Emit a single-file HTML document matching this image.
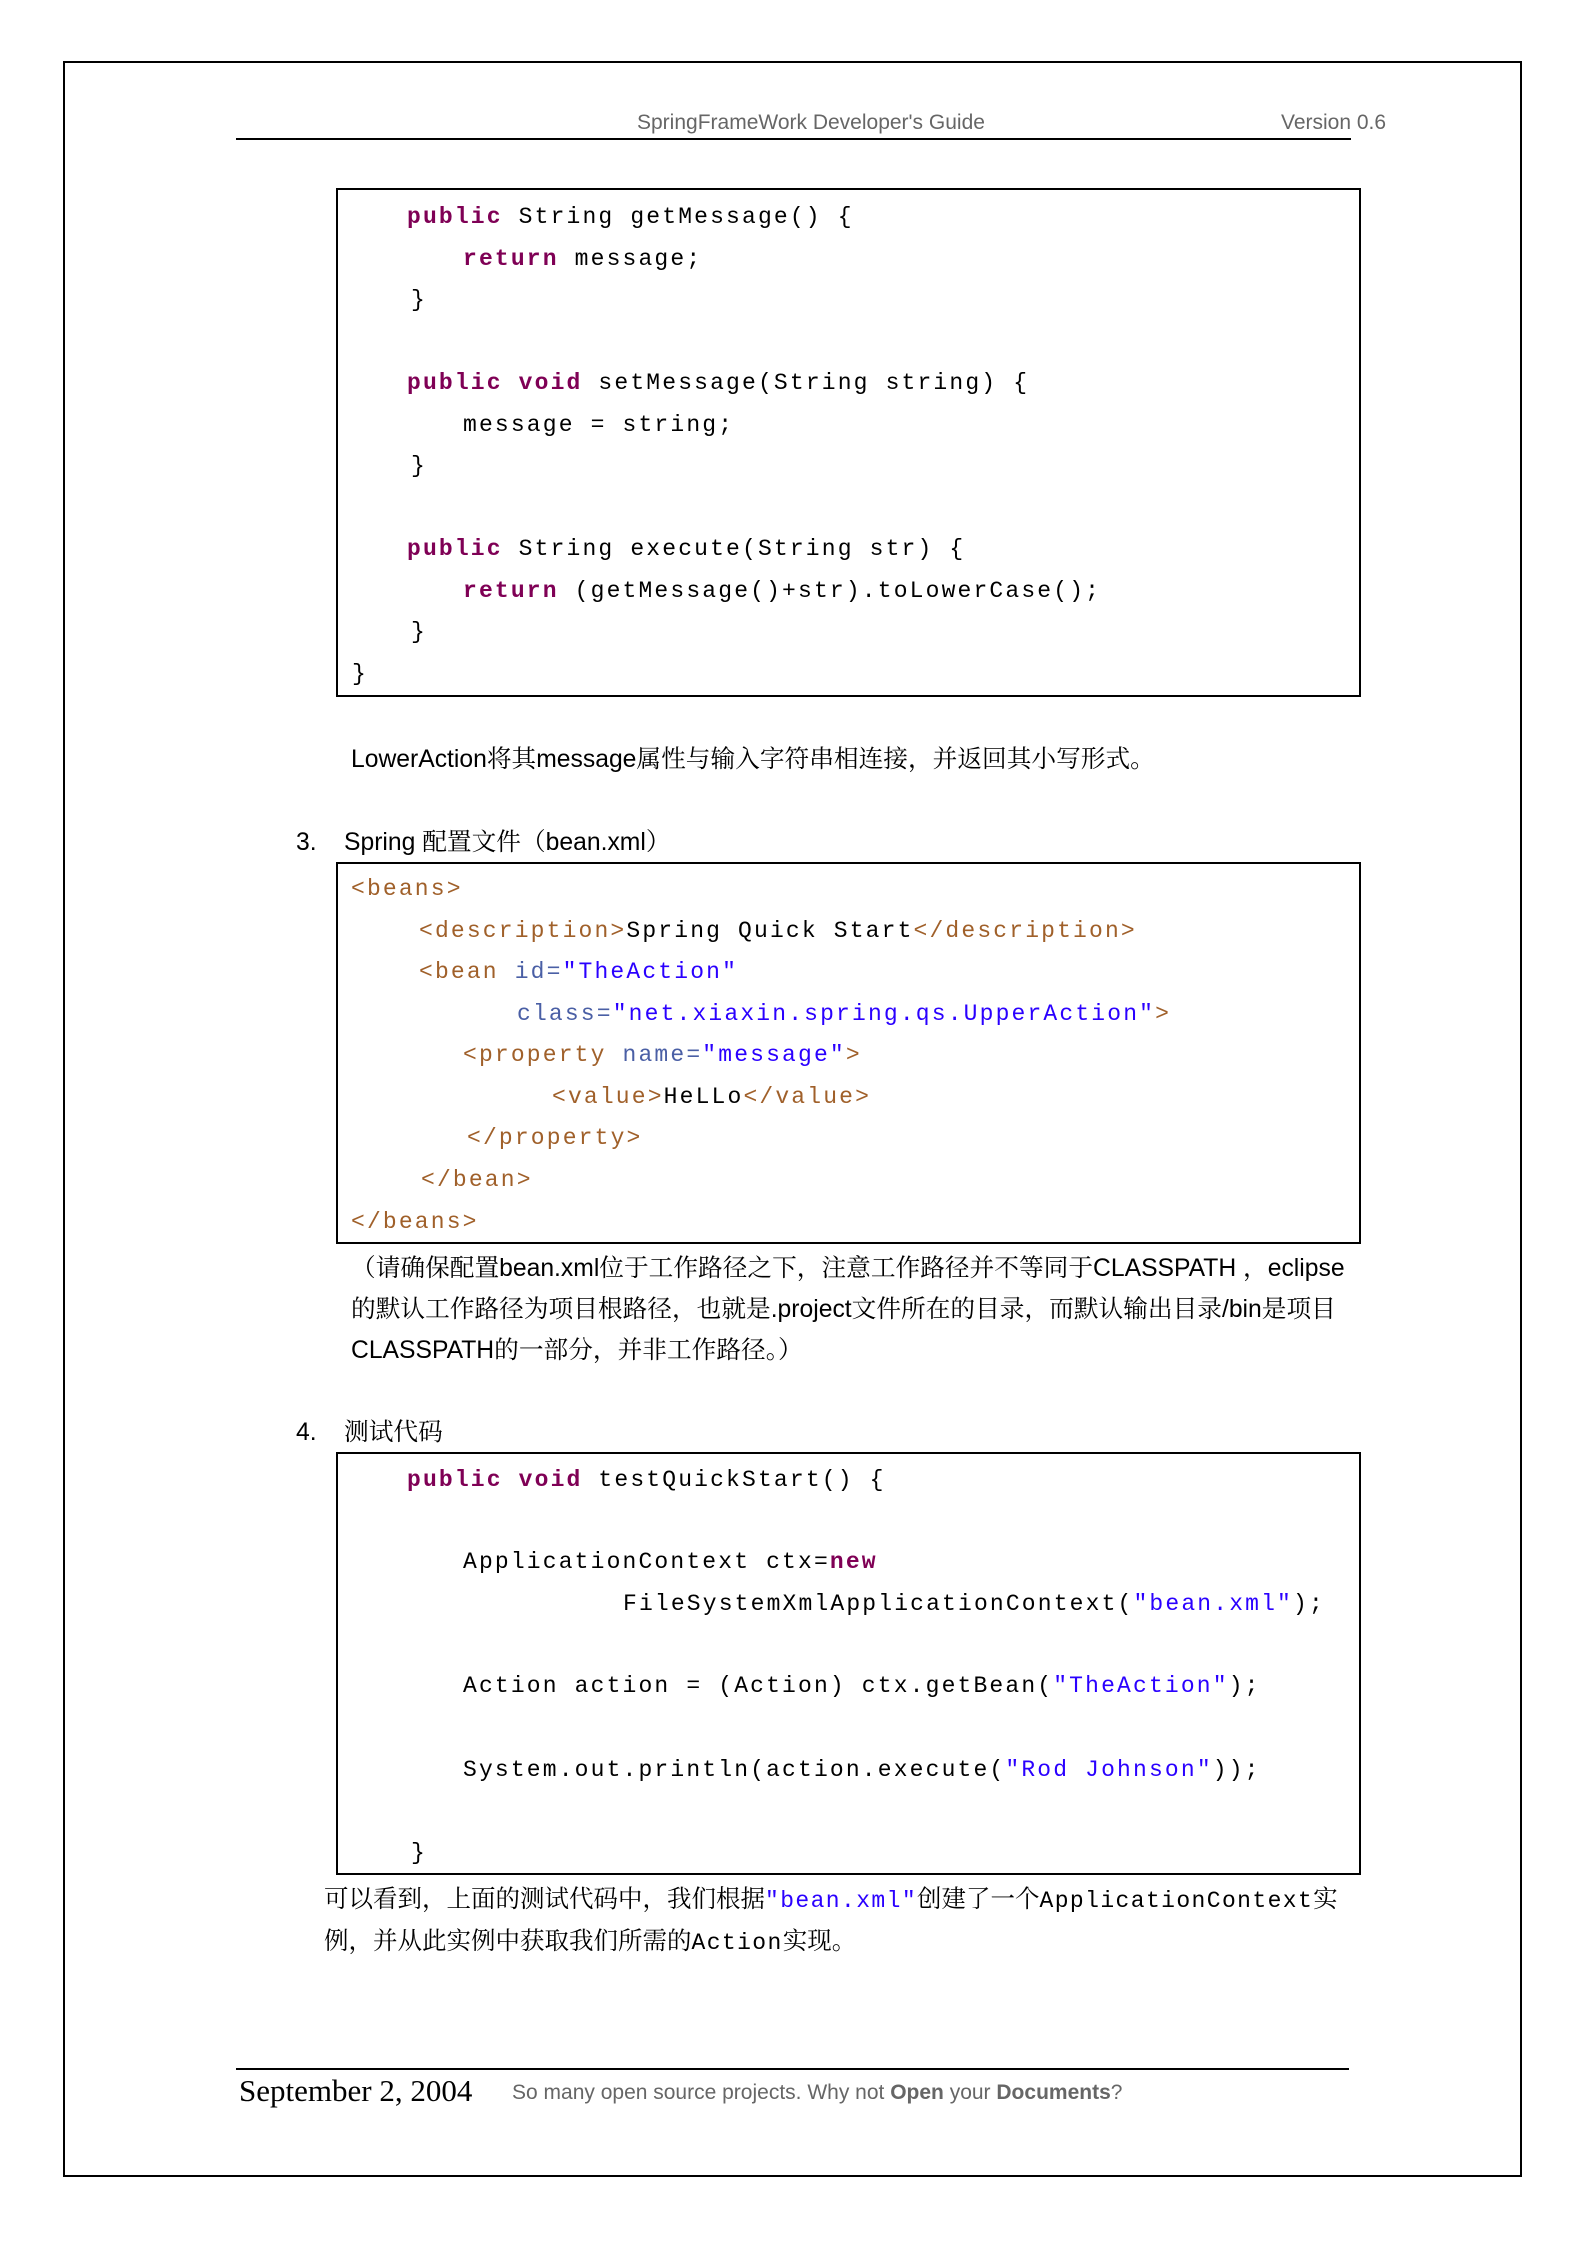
<!DOCTYPE html>
<html><head><meta charset="utf-8">
<style>
html,body{margin:0;padding:0;background:#fff;}
body{width:1586px;height:2242px;position:relative;overflow:hidden;}
.a{position:absolute;white-space:pre;}
.box{position:absolute;border:2px solid #000;box-sizing:border-box;}
.code{position:absolute;white-space:pre;font-family:"Liberation Mono",monospace;font-size:23px;letter-spacing:2.15px;line-height:30px;height:30px;color:#000;}
.k{color:#7f0055;font-weight:bold;}
.s{color:#2a00ff;}
.t{color:#a0602a;}
.n{color:#4a5fa5;}
.cn{font-family:"Liberation Sans","Noto Serif CJK SC","Noto Sans CJK SC",sans-serif;font-size:24.7px;line-height:30px;color:#000;}
.hd{font-family:"Liberation Sans",sans-serif;font-size:21px;color:#666;}
</style></head><body>
<div class="box" style="left:63px;top:61px;width:1459px;height:2116px;"></div>
<div class="a hd" style="left:637px;top:111px;">SpringFrameWork Developer's Guide</div>
<div class="a hd" style="left:1281px;top:111px;">Version 0.6</div>
<div style="position:absolute;left:236px;top:138px;width:1115px;height:2px;background:#000"></div>

<div class="box" style="left:336px;top:188px;width:1025px;height:509px;"></div>
<div class="code" style="left:407px;top:202px"><span class="k">public</span> String getMessage() {</div>
<div class="code" style="left:463px;top:244px"><span class="k">return</span> message;</div>
<div class="code" style="left:411px;top:285px">}</div>
<div class="code" style="left:407px;top:368px"><span class="k">public</span> <span class="k">void</span> setMessage(String string) {</div>
<div class="code" style="left:463px;top:410px">message = string;</div>
<div class="code" style="left:411px;top:451px">}</div>
<div class="code" style="left:407px;top:534px"><span class="k">public</span> String execute(String str) {</div>
<div class="code" style="left:463px;top:576px"><span class="k">return</span> (getMessage()+str).toLowerCase();</div>
<div class="code" style="left:411px;top:617px">}</div>
<div class="code" style="left:352px;top:659px">}</div>

<div class="a cn" style="left:351px;top:745px;">LowerAction将其message属性与输入字符串相连接，并返回其小写形式。</div>

<div class="a cn" style="left:296px;top:828px;">3.</div>
<div class="a cn" style="left:344px;top:828px;">Spring 配置文件（bean.xml）</div>

<div class="box" style="left:336px;top:862px;width:1025px;height:382px;"></div>
<div class="code" style="left:351px;top:874px"><span class="t">&lt;beans&gt;</span></div>
<div class="code" style="left:419px;top:916px"><span class="t">&lt;description&gt;</span>Spring Quick Start<span class="t">&lt;/description&gt;</span></div>
<div class="code" style="left:419px;top:957px"><span class="t">&lt;bean</span> <span class="n">id=</span><span class="s">"TheAction"</span></div>
<div class="code" style="left:517px;top:999px"><span class="n">class=</span><span class="s">"net.xiaxin.spring.qs.UpperAction"</span><span class="t">&gt;</span></div>
<div class="code" style="left:463px;top:1040px"><span class="t">&lt;property</span> <span class="n">name=</span><span class="s">"message"</span><span class="t">&gt;</span></div>
<div class="code" style="left:552px;top:1082px"><span class="t">&lt;value&gt;</span>HeLLo<span class="t">&lt;/value&gt;</span></div>
<div class="code" style="left:467px;top:1123px"><span class="t">&lt;/property&gt;</span></div>
<div class="code" style="left:421px;top:1165px"><span class="t">&lt;/bean&gt;</span></div>
<div class="code" style="left:351px;top:1207px"><span class="t">&lt;/beans&gt;</span></div>

<div class="a cn" style="left:351px;top:1254px;">（请确保配置bean.xml位于工作路径之下，注意工作路径并不等同于CLASSPATH ，eclipse</div>
<div class="a cn" style="left:351px;top:1295px;">的默认工作路径为项目根路径，也就是.project文件所在的目录，而默认输出目录/bin是项目</div>
<div class="a cn" style="left:351px;top:1336px;">CLASSPATH的一部分，并非工作路径。）</div>

<div class="a cn" style="left:296px;top:1418px;">4.</div>
<div class="a cn" style="left:344px;top:1418px;">测试代码</div>

<div class="box" style="left:336px;top:1452px;width:1025px;height:423px;"></div>
<div class="code" style="left:407px;top:1465px"><span class="k">public</span> <span class="k">void</span> testQuickStart() {</div>
<div class="code" style="left:463px;top:1547px">ApplicationContext ctx=<span class="k">new</span></div>
<div class="code" style="left:623px;top:1589px">FileSystemXmlApplicationContext(<span class="s">"bean.xml"</span>);</div>
<div class="code" style="left:463px;top:1671px">Action action = (Action) ctx.getBean(<span class="s">"TheAction"</span>);</div>
<div class="code" style="left:463px;top:1755px">System.out.println(action.execute(<span class="s">"Rod Johnson"</span>));</div>
<div class="code" style="left:411px;top:1838px">}</div>

<div class="a cn" style="left:324px;top:1885px;font-size:24.5px;">可以看到，上面的测试代码中，我们根据<span class="code" style="position:static;font-size:23px;letter-spacing:1.4px;"><span class="s">"bean.xml"</span></span>创建了一个<span class="code" style="position:static;font-size:23px;letter-spacing:1.4px;">ApplicationContext</span>实</div>
<div class="a cn" style="left:324px;top:1927px;font-size:24.5px;">例，并从此实例中获取我们所需的<span class="code" style="position:static;font-size:23px;letter-spacing:1.4px;">Action</span>实现。</div>

<div style="position:absolute;left:236px;top:2068px;width:1113px;height:2px;background:#000"></div>
<div class="a" style="left:239px;top:2073px;font-family:'Liberation Serif',serif;font-size:31px;color:#000;">September 2, 2004</div>
<div class="a" style="left:512px;top:2081px;font-family:'Liberation Sans',sans-serif;font-size:21px;color:#666;">So many open source projects. Why not <b>Open</b> your <b>Documents</b>?</div>
</body></html>
